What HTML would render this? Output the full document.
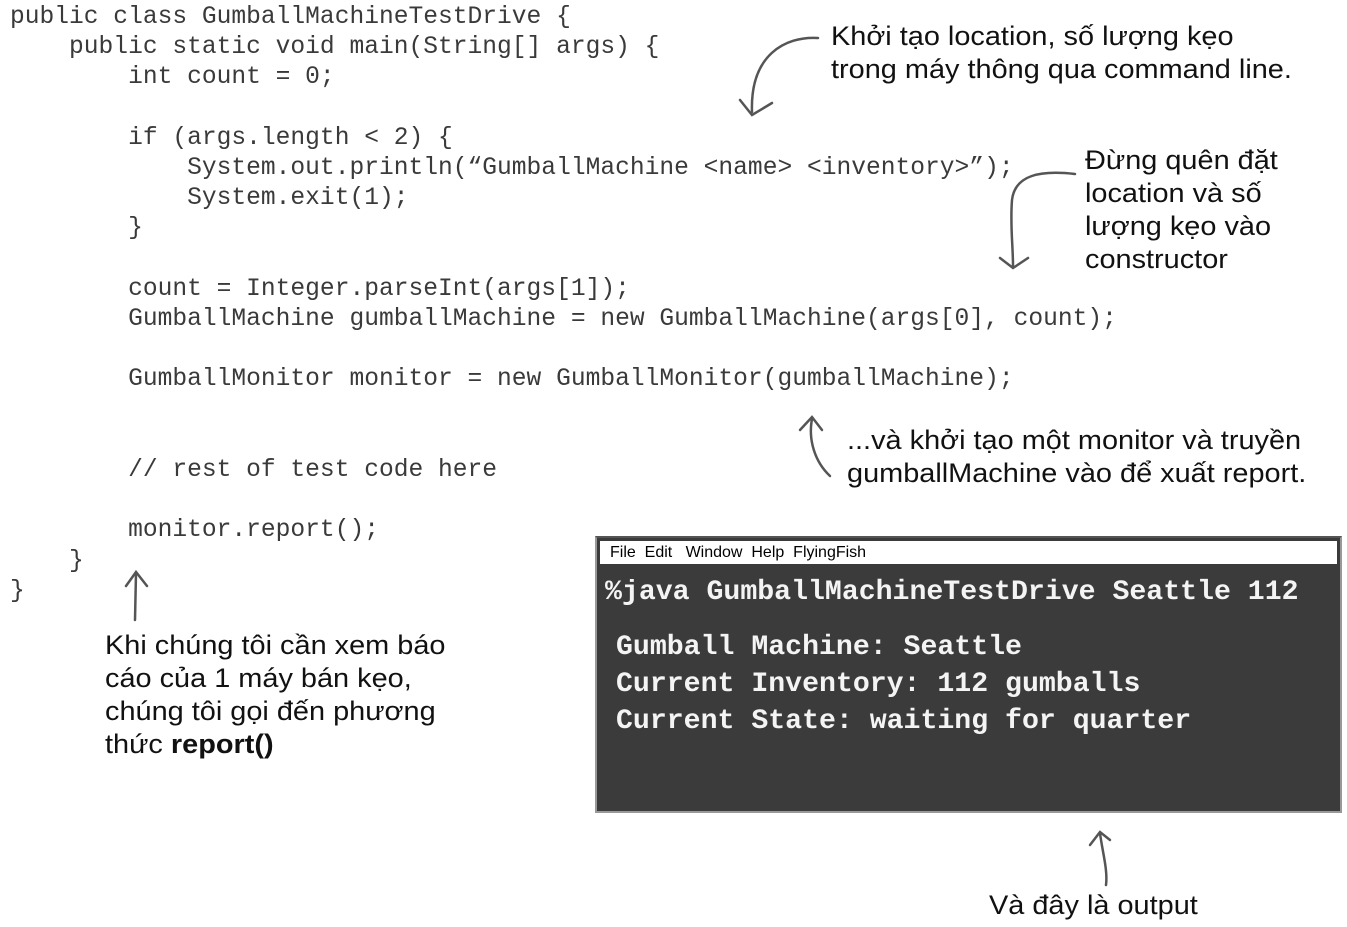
<!DOCTYPE html>
<html><head><meta charset="utf-8"><style>
body{margin:0;width:1347px;height:927px;background:#fff;position:relative;overflow:hidden}
.c{position:absolute;left:10px;top:3px;font-family:"Liberation Mono",monospace;font-size:24.6px;line-height:30.2px;color:#3a3a3a;white-space:pre;margin:0}
.t{position:absolute;font-family:"Liberation Sans",sans-serif;font-size:27px;line-height:33px;color:#111;white-space:pre;transform-origin:0 0;transform:scaleX(1.07)}
.term{position:absolute;left:595px;top:536px;width:743px;height:273px;background:#3b3b3b;border:2px solid #999;border-top:2px solid #555}
.menu{position:absolute;left:3px;top:3px;right:3px;height:23px;background:#fff;font-family:"Liberation Sans",sans-serif;font-size:16px;line-height:23px;color:#000;padding-left:10px;white-space:pre}
.tt{position:absolute;font-family:"Liberation Mono",monospace;font-weight:bold;font-size:28.2px;color:#f4f4f4;white-space:pre;line-height:37px}
</style></head><body>
<pre class="c">public class GumballMachineTestDrive {
    public static void main(String[] args) {
        int count = 0;

        if (args.length &lt; 2) {
            System.out.println(“GumballMachine &lt;name&gt; &lt;inventory&gt;”);
            System.exit(1);
        }

        count = Integer.parseInt(args[1]);
        GumballMachine gumballMachine = new GumballMachine(args[0], count);

        GumballMonitor monitor = new GumballMonitor(gumballMachine);


        // rest of test code here

        monitor.report();
    }
}</pre>
<div class="t" style="left:831px;top:20px">Khởi tạo location, số lượng kẹo
trong máy thông qua command line.</div>
<div class="t" style="left:1085px;top:144px">Đừng quên đặt
location và số
lượng kẹo vào
constructor</div>
<div class="t" style="left:847px;top:424px">...và khởi tạo một monitor và truyền
gumballMachine vào để xuất report.</div>
<div class="t" style="left:105px;top:629px">Khi chúng tôi cần xem báo
cáo của 1 máy bán kẹo,
chúng tôi gọi đến phương
thức <b>report()</b></div>
<div class="t" style="left:989px;top:889px">Và đây là output</div>
<svg style="position:absolute;left:0;top:0" width="1347" height="927" fill="none" stroke="#555" stroke-width="2.5" stroke-linecap="round">
<path d="M818 38 C785 36 750 55 752 112"/><path d="M740 100 L752 115 L772 103"/>
<path d="M1075 174 C1040 170 1015 175 1012 200 C1010 225 1013 245 1013 266"/><path d="M1000 258 L1013 268 L1028 258"/>
<path d="M812 419 C808 440 815 462 830 476"/><path d="M800 430 L812 417 L822 430"/>
<path d="M136 573 L135 620"/><path d="M126 586 L136 572 L147 586"/>
<path d="M1100 833 C1102 850 1108 870 1106 885"/><path d="M1090 845 L1100 832 L1110 840"/>
</svg>
<div class="term">
<div class="menu">File  Edit   Window  Help  FlyingFish</div>
<div class="tt" style="left:8px;top:36px">%java GumballMachineTestDrive Seattle 112</div>
<div class="tt" style="left:19px;top:91px">Gumball Machine: Seattle</div>
<div class="tt" style="left:19px;top:128px">Current Inventory: 112 gumballs</div>
<div class="tt" style="left:19px;top:165px">Current State: waiting for quarter</div>
</div>
</body></html>
